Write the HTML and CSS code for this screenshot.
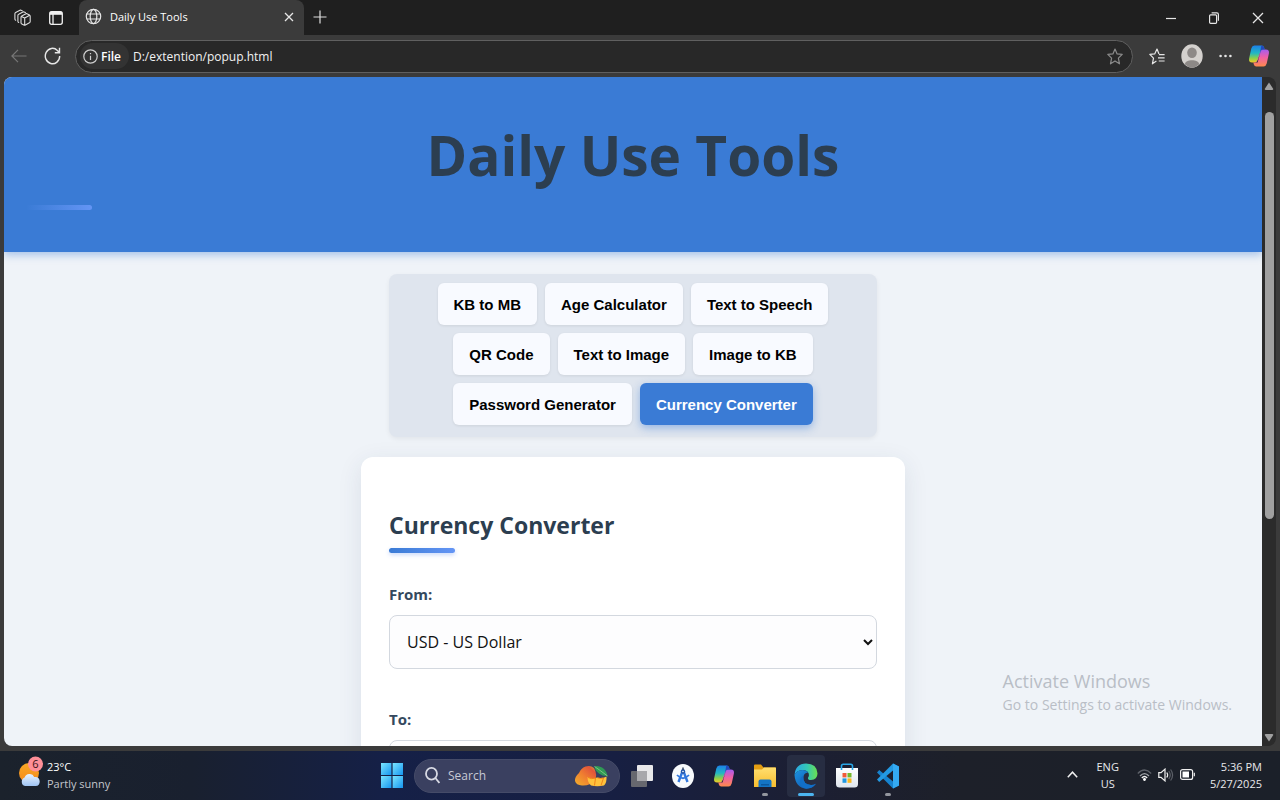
FILE: index.html
```html
<!DOCTYPE html>
<html lang="en">
<head>
<meta charset="utf-8">
<title>Daily Use Tools</title>
<link rel="stylesheet" href="styles.css">
</head>
<body>
<svg class="defs" aria-hidden="true">
  <defs>
    <linearGradient id="cpA" x1="0" y1="0" x2="0" y2="1"><stop offset="0" stop-color="#1c7fe8"/><stop offset=".45" stop-color="#22b7c4"/><stop offset=".75" stop-color="#8bd04a"/><stop offset="1" stop-color="#f5c927"/></linearGradient>
    <linearGradient id="cpB" x1="0" y1="0" x2="0" y2="1"><stop offset="0" stop-color="#a45cf0"/><stop offset=".45" stop-color="#ee5fa8"/><stop offset="1" stop-color="#ff8a4c"/></linearGradient>
    <linearGradient id="win" x1="0" y1="0" x2="1" y2="1"><stop offset="0" stop-color="#7be6ff"/><stop offset="1" stop-color="#1595f0"/></linearGradient>
    <linearGradient id="sun" x1="0" y1="0" x2="0" y2="1"><stop offset="0" stop-color="#f9a825"/><stop offset="1" stop-color="#f58a1c"/></linearGradient>
    <linearGradient id="cloud" x1="0" y1="0" x2="0" y2="1"><stop offset="0" stop-color="#eaf3ff"/><stop offset="1" stop-color="#9fc4f3"/></linearGradient>
    <linearGradient id="mango" x1="0" y1="1" x2="1" y2="0"><stop offset="0" stop-color="#f0b02c"/><stop offset=".45" stop-color="#f08030"/><stop offset=".8" stop-color="#e2553a"/><stop offset="1" stop-color="#c8b43c"/></linearGradient>
    <linearGradient id="fold" x1="0" y1="0" x2="0" y2="1"><stop offset="0" stop-color="#ffdf70"/><stop offset="1" stop-color="#f8bd2e"/></linearGradient>
    <linearGradient id="edA" x1="0" y1="0" x2="1" y2="0"><stop offset="0" stop-color="#2aa5e8"/><stop offset=".55" stop-color="#34c8b4"/><stop offset="1" stop-color="#6be04f"/></linearGradient>
    <linearGradient id="edB" x1="0" y1="0" x2="1" y2="1"><stop offset="0" stop-color="#1c93e0"/><stop offset="1" stop-color="#0d4fa8"/></linearGradient>
    <linearGradient id="store" x1="0" y1="0" x2="0" y2="1"><stop offset="0" stop-color="#fff"/><stop offset="1" stop-color="#dfe5ec"/></linearGradient>
    <symbol id="copilot" viewBox="0 0 24 24" preserveAspectRatio="none">
      <path d="M7 1.500h8q2 0 2.600 2l.6 2h-1.700q-2 0-2.700 2.400L11 15.500q-.9 3-3.500 3H4.600q-4.200 0-3.400-4L3.600 4.500Q4.500 1.500 7 1.500z" fill="url(#cpA)"/>
      <path d="M17 22.500H9q-2 0-2.600-2l-.6-2h1.700q2 0 2.700-2.400L13 8.500q.9-3 3.500-3h2.900q4.200 0 3.400 4l-2.400 10q-.9 3-3.400 3z" fill="url(#cpB)"/>
      <path d="M14.500 1.500q2.400 0 3 2l.8 2h-2q-2 0-2.700 2.400l-.8 2.700z" fill="#2348bd"/>
      <path d="M13.600 8 10.500 18.500H7.600q2.500-.5 3.300-3z" fill="#30323c"/>
    </symbol>
  </defs>
</svg>

<header class="browser">
  <div class="tabstrip">
    <button class="icon-btn" aria-label="Workspaces"><svg width="17" height="18" viewBox="0 0 17 18" fill="none" stroke="#dedede" stroke-width="1.100" stroke-linejoin="round" stroke-linecap="round"><path d="M7 8.300q0-1 .8-1.400l4.600-2.300 3 1.300q.8.400.8 1.300v5.300q0 .8-.8 1.300l-4 2.200q-.8.400-1.600 0L7.800 15q-.8-.4-.8-1.300zM7.400 7.400l3.300 1.500 5-2.700M10.700 9v7.200M4.700 13.500q-.8-.4-.8-1.300V6.500q0-.9.800-1.300l4.700-2.500 2 .8M1.700 11.200q-.8-.4-.8-1.300V4.700q0-.9.800-1.300L6.400 1l1.800.7"/></svg></button>
    <button class="icon-btn" aria-label="Tab actions"><svg width="16" height="16" viewBox="0 0 16 16" fill="none" stroke="#f0f0f0" stroke-width="1.300"><rect x="1.700" y="1.700" width="12.600" height="12.600" rx="2"/><path d="M2 3.300h12" stroke-width="3"/><path d="M5 4v10"/></svg></button>
    <div class="tab">
      <svg width="17" height="17" viewBox="0 0 17 17" fill="none" stroke="#e6e6e6" stroke-width="1.200"><circle cx="8.500" cy="8.500" r="7.200"/><ellipse cx="8.500" cy="8.500" rx="3.300" ry="7.200"/><path d="M1.800 6h13.400M1.800 11h13.400"/></svg>
      <span class="tab-title">Daily Use Tools</span>
      <button class="icon-btn" aria-label="Close tab"><svg width="10" height="10" viewBox="0 0 10 10" stroke="#e6e6e6" stroke-width="1.300"><path d="m1 1 8 8M9 1 1 9"/></svg></button>
    </div>
    <button class="icon-btn new-tab" aria-label="New tab"><svg width="14" height="14" viewBox="0 0 14 14" stroke="#dedede" stroke-width="1.200"><path d="M7 .5v13M.5 7h13"/></svg></button>
    <div class="window-controls">
      <button class="icon-btn" aria-label="Minimize"><svg width="10" height="10" viewBox="0 0 10 10" stroke="#e6e6e6" stroke-width="1.200"><path d="M0 5.500h10"/></svg></button>
      <button class="icon-btn" aria-label="Restore"><svg width="10" height="12" viewBox="0 0 10 12" fill="none" stroke="#e6e6e6" stroke-width="1.200"><rect x=".6" y="2.800" width="7" height="8.500" rx="1"/><path d="M2.600.8h5.300q1.500 0 1.500 1.600v6.400"/></svg></button>
      <button class="icon-btn" aria-label="Close"><svg width="12" height="12" viewBox="0 0 12 12" stroke="#e6e6e6" stroke-width="1.300"><path d="m1 1 10 10M11 1 1 11"/></svg></button>
    </div>
  </div>
  <div class="toolbar">
    <button class="icon-btn" aria-label="Back"><svg width="16" height="14" viewBox="0 0 16 14" fill="none" stroke="#777" stroke-width="1.200"><path d="M15.500 7H1M7 .8.900 7 7 13.200"/></svg></button>
    <button class="icon-btn reload" aria-label="Refresh"><svg width="17" height="18" viewBox="0 0 17 18" fill="none" stroke="#e6e6e6" stroke-width="1.400"><path d="M15.700 9a7.200 7.700 0 1 1-2.300-5.600l2 2M15.500.8v4.900h-4.700"/></svg></button>
    <div class="address">
      <button class="site-info"><svg width="15" height="15" viewBox="0 0 15 15" fill="none" stroke="#cfcfcf" stroke-width="1.200"><circle cx="7.500" cy="7.500" r="6.700"/><path d="M7.500 6.700v4.200M7.500 4v1.300"/></svg>File</button>
      <input class="url" type="text" aria-label="Address" value="D:/extention/popup.html">
      <button class="icon-btn" aria-label="Favorite"><svg width="16" height="17" viewBox="0 0 16 17" fill="none" stroke="#8c8c8c" stroke-width="1.200" stroke-linejoin="round"><path d="m8 1 2.100 4.900 5.100.5-3.800 3.700 1.100 5.700L8 12.900l-4.500 2.900 1.100-5.700L.8 6.400l5.100-.5z"/></svg></button>
    </div>
    <button class="icon-btn" aria-label="Favorites list"><svg width="16" height="17" viewBox="0 0 16 17" fill="none" stroke="#e6e6e6" stroke-width="1.200" stroke-linejoin="round"><path d="M10 6 8 1 5.700 5.900.8 6.400l3.700 3.700-1.100 5.700 4-2.700M10 6.600h5.600M9 9.800h6.600M9.800 13h5.800"/></svg></button>
    <button class="icon-btn" aria-label="Profile"><svg width="22" height="24" viewBox="0 0 22 24"><ellipse cx="11" cy="12" rx="10.700" ry="11.800" fill="#d4d1ce"/><ellipse cx="11" cy="8.800" rx="4.800" ry="5.200" fill="#8d8987"/><path d="M3.700 20.300C4.500 14.800 17.500 14.800 18.300 20.300Q11 27 3.700 20.300z" fill="#8d8987"/></svg></button>
    <button class="icon-btn" aria-label="More"><svg width="13" height="4" viewBox="0 0 13 4" fill="#e6e6e6"><circle cx="1.600" cy="2" r="1.300"/><circle cx="6.500" cy="2" r="1.300"/><circle cx="11.400" cy="2" r="1.300"/></svg></button>
    <button class="icon-btn" aria-label="Copilot"><svg width="22" height="24"><use href="#copilot"/></svg></button>
  </div>
</header>

<div class="viewport">
  <main class="page">
    <div class="banner"><h1>Daily Use Tools</h1></div>
    <nav class="tools">
      <button>KB to MB</button>
      <button>Age Calculator</button>
      <button>Text to Speech</button>
      <button>QR Code</button>
      <button>Text to Image</button>
      <button>Image to KB</button>
      <button>Password Generator</button>
      <button class="active">Currency Converter</button>
    </nav>
    <section class="card">
      <h2>Currency Converter</h2>
      <label for="from">From:</label>
      <select id="from"><option>USD - US Dollar</option></select>
      <label for="to">To:</label>
      <select id="to"><option></option></select>
    </section>
    <div class="watermark"><p class="wm-title">Activate Windows</p><p>Go to Settings to activate Windows.</p></div>
  </main>
  <div class="scrollbar" aria-hidden="true">
    <svg width="10" height="8" viewBox="0 0 10 8"><path d="M5 .5 9.300 7Q9.300 8 8 8H2Q.7 8 .7 7z" fill="#a0a0a0"/></svg>
    <div class="track"><div class="thumb"></div></div>
    <svg width="10" height="8" viewBox="0 0 10 8"><path d="M5 7.500.7 1Q.7 0 2 0h6q1.300 0 1.300 1z" fill="#a0a0a0"/></svg>
  </div>
</div>

<footer class="taskbar">
  <div class="weather">
    <svg width="26" height="32" viewBox="0 0 26 32"><circle cx="10" cy="17" r="10" fill="url(#sun)"/><path d="M6 30a4.500 4.500 0 0 1-.4-8.500Q7 17.500 11 18q3 .2 4.200 3 5-.8 5.500 4.300.1 4.700-4 4.700z" fill="url(#cloud)"/><circle cx="16.500" cy="8" r="7.500" fill="#ff8f97"/><text x="16.500" y="12" text-anchor="middle" class="badge-text">6</text></svg>
    <div><p class="temp">23°C</p><p>Partly sunny</p></div>
  </div>
  <div class="dock">
    <button class="app" aria-label="Start"><svg width="22" height="25" viewBox="0 0 22 25" fill="url(#win)"><rect width="10.400" height="12"/><rect x="11.600" width="10.400" height="12"/><rect y="13" width="10.400" height="12"/><rect x="11.600" y="13" width="10.400" height="12"/></svg></button>
    <label class="search">
      <svg width="15" height="17" viewBox="0 0 15 17" fill="none" stroke="#d8dae4" stroke-width="1.800"><ellipse cx="6.500" cy="6.800" rx="5.500" ry="5.900"/><path d="m10.400 11 4 5"/></svg>
      <input type="text" placeholder="Search" aria-label="Search">
      <svg width="36" height="22" viewBox="0 0 36 22"><path d="M20 3q-3.500-3-8.500-1.500Q7 3 5 8 .5 12 1 16q1 4 7 4.500 8 .5 12.500-5 3.500-5.500-.5-12.500z" fill="url(#mango)"/><path d="M20.500 1.500q3-1.500 7.500 1t5.500 8.500q-4.500.5-8.500-2.500t-4.500-7z" fill="#2f9a55"/><path d="m20.500 1.500 5 3.500 8 6" fill="none" stroke="#8fce8a" stroke-width=".8"/><path d="M13.500 12q4 2.500 9.500.5 5 1.500 9.500-1 .5 6-2.500 9-7 1.500-13 0-3.500-3-3.500-8.500z" fill="#ffc23c"/><path d="M14 12.500q3.500 2 7.500.5l-1 7.500M23.500 12.800q3 1.200 6 .2l-2.500 7.500" fill="none" stroke="#f08418"/></svg>
    </label>
    <button class="app" aria-label="Task view"><svg width="24" height="24" viewBox="0 0 24 24"><rect x="7" y="1" width="16" height="16" rx="1" fill="#e8e8ea"/><rect x="1" y="7" width="16" height="16" rx="1" fill="#707074" fill-opacity=".9"/><path d="M7 7h10v10H7z" fill="#a8a8ac"/></svg></button>
    <button class="app" aria-label="Android Studio"><svg width="22" height="24" viewBox="0 0 22 24"><ellipse cx="11" cy="12" rx="11" ry="12" fill="#f8fafc"/><path d="M11 6 6.500 18M11 6l4.500 12" stroke="#3277dd" stroke-width="2.400"/><path d="M5 11q6 6.500 12 0" fill="none" stroke="#3277dd" stroke-width="1.800"/><circle cx="11" cy="7.500" r="2.200" fill="#2456a8"/><path d="M11 3.500V6" stroke="#30405c" stroke-width="1.500"/><circle cx="11" cy="7.500" r=".8" fill="#fff"/></svg></button>
    <button class="app" aria-label="Copilot"><svg width="22" height="24"><use href="#copilot"/></svg></button>
    <button class="app running" aria-label="File Explorer"><svg width="24" height="24" viewBox="0 0 24 24"><path d="M1 1.500Q1 .5 2 .5h6l2.500 3H23V10H1z" fill="#e39d12"/><path d="M1 5.500h8l2-2h11q1 0 1 1V23H1z" fill="url(#fold)"/><path d="M5.500 23v-5.500q0-2 2-2h9q2 0 2 2V23z" fill="#1474c4"/><path d="M8 20h8v1.500H8z" fill="#0b579d"/></svg></button>
    <button class="app running current" aria-label="Microsoft Edge"><svg width="24" height="26" viewBox="0 0 24 26"><path d="M.5 12Q1.500.7 12 .5 23 .7 23.500 10.500q-.2 6-6.500 6.500-3.500 0-3-2.300 1.400-1.500.8-4Q13.400 7 8.500 7 2.800 7.200.5 12z" fill="url(#edA)"/><path d="M.5 12Q2.800 7.200 8.500 7q3.900 0 5.500 2.700-3.600-.3-4.700 4.100-.6 7.500 7.700 8.200 2.900 0 5-1.200-3.600 4.900-9.700 4.900Q1.500 24.700.5 12z" fill="url(#edB)"/><path d="M9.300 13.800q-.6 7.500 7.700 8.200 2.900 0 5-1.200-3.600 4.900-9.700 4.900-5.600-.6-6.200-6.400-.2-5.500 4-7.300z" fill="#126fc8"/></svg></button>
    <button class="app" aria-label="Microsoft Store"><svg width="22" height="25" viewBox="0 0 22 25"><path d="M0 5h22v16q0 3.500-3.500 3.500h-15Q0 24.500 0 21z" fill="url(#store)"/><path d="M5.500 7V3q0-1.800 1.800-1.800h7.400q1.800 0 1.800 1.800v4" fill="none" stroke="#2aa8e8" stroke-width="1.600"/><path d="M6.500 10h4v4.400h-4z" fill="#f15a3a"/><path d="M11.500 10h4v4.400h-4z" fill="#76b82a"/><path d="M6.500 15.400h4v4.400h-4z" fill="#1f97e0"/><path d="M11.500 15.400h4v4.400h-4z" fill="#fbb81b"/></svg></button>
    <button class="app running" aria-label="Visual Studio Code"><svg width="24" height="26" viewBox="0 0 24 26"><path d="m17 .5 6 3v19l-6 3L1 9.500 3.200 7 17 18.500z" fill="#1683cf"/><path d="M17 .5 1 16.500 3.200 19 17 7.500z" fill="#2399e2"/><path d="m17 .5 6 3v19l-6 3z" fill="#34aaf2"/></svg></button>
  </div>
  <div class="tray">
    <svg width="11" height="7" viewBox="0 0 11 7" fill="none" stroke="#f0f0f0" stroke-width="1.500"><path d="m.8 6.200 4.700-5 4.700 5"/></svg>
    <div class="lang"><p>ENG</p><p>US</p></div>
    <div class="status">
      <svg width="15" height="12" viewBox="0 0 15 12" fill="none" stroke="#5c6068" stroke-width="1.300"><path d="M.8 4.500q6.700-7 13.400 0"/><path d="M3 7q4.500-4.700 9 0" stroke="#a0a3a8"/><path d="M4.800 9q2.700-3 5.400 0" stroke="#f2f2f2"/><circle cx="7.500" cy="10.500" r=".8" fill="#fff" stroke="#fff"/></svg>
      <svg width="16" height="14" viewBox="0 0 16 14" fill="none" stroke="#f0f0f0" stroke-width="1.200"><path d="M.8 4.600H3l4-3.500v11.800l-4-3.500H.8z"/><path d="M8.800 4.500q1.700 2.500 0 5"/><path d="M10.800 3q2.900 4 0 8M12.600 1.500q4 5.500 0 11" stroke="#5c6068"/></svg>
      <svg width="15" height="11" viewBox="0 0 15 11" fill="none" stroke="#f0f0f0" stroke-width="1.200"><rect x=".6" y=".6" width="12" height="9.800" rx="2"/><path d="M14.300 3.700v3.600"/><path d="M2.500 2.500H9v6H2.500z" fill="#fff" stroke="none"/></svg>
    </div>
    <div class="clock"><p>5:36 PM</p><p>5/27/2025</p></div>
  </div>
</footer>
</body>
</html>
```

FILE: styles.css
```css
* { box-sizing: border-box; }

body {
  margin: 0;
  height: 100vh;
  display: flex;
  flex-direction: column;
  overflow: hidden;
  background: #3b3b3b;
  font-family: "Open Sans", "Noto Sans", sans-serif;
}

p, h1, h2 { margin: 0; }
svg { display: block; flex: none; }
.defs { position: absolute; width: 0; height: 0; }
button, input, select { font: inherit; }
button { border: 0; padding: 0; }

.icon-btn {
  background: none;
  display: grid;
  place-items: center;
  flex: none;
}

/* Browser chrome */
.browser { flex: none; color: #fff; }

.tabstrip {
  height: 35px;
  display: flex;
  align-items: center;
  gap: 17px;
  padding-left: 14px;
  background: #1f1f1f;
}

.tab {
  align-self: stretch;
  width: 225px;
  margin-left: -2px;
  display: flex;
  align-items: center;
  gap: 8px;
  padding: 0 10px 2px 6px;
  background: #3b3b3b;
  border-radius: 8px 8px 0 0;
}

.tab-title { flex: 1; font-size: 11px; }
.new-tab { margin-left: -8px; margin-bottom: 2px; }

.window-controls {
  margin-left: auto;
  display: flex;
  align-items: center;
  gap: 33px;
  padding-right: 16px;
}

.toolbar {
  height: 42px;
  display: flex;
  align-items: center;
  gap: 16px;
  padding: 0 10px 0 11px;
}

.reload { margin-left: 1px; }

.address {
  flex: 1;
  height: 33px;
  margin-left: -2px;
  display: flex;
  align-items: center;
  gap: 4px;
  padding: 0 9px 0 4px;
  background: #282828;
  border: 1px solid #606060;
  border-radius: 17px;
}

.site-info {
  height: 26px;
  display: flex;
  align-items: center;
  gap: 3px;
  padding: 0 8px 0 3px;
  border-radius: 13px;
  background: #333;
  color: #fff;
  font-size: 12px;
  font-weight: 600;
}

.url {
  flex: 1;
  min-width: 0;
  padding: 0;
  border: 0;
  background: none;
  color: #f2f2f2;
  font-size: 12px;
}

/* Web page */
.viewport {
  flex: 1;
  min-height: 0;
  display: flex;
  margin: 0 4px 5px;
}

.page {
  flex: 1;
  position: relative;
  overflow: hidden;
  background: #eff3f8;
  border-radius: 8px 0 0 8px;
}

.banner {
  padding: 36px 22px 42px;
  background: #3a7bd5;
  box-shadow: 0 3px 8px rgba(58, 123, 213, .4);
}

.banner h1 {
  color: #2c3e50;
  font-size: 55px;
  line-height: 84px;
  text-align: center;
}

.banner h1::after,
.card h2::after {
  content: "";
  display: block;
  width: 66px;
  height: 5px;
  border-radius: 3px;
  background: linear-gradient(90deg, #3a7bd5, #6495f5);
}

.banner h1::after { margin-top: 8px; }

.tools {
  width: 488px;
  margin: 22px auto 20px;
  padding: 9px 8px 12px;
  display: flex;
  flex-wrap: wrap;
  justify-content: center;
  gap: 8px;
  background: #dfe5ee;
  border-radius: 8px;
  box-shadow: 0 2px 5px rgba(0, 0, 0, .06);
}

.tools button {
  height: 42px;
  padding: 0 16px;
  border-radius: 6px;
  background: #f8faff;
  color: #000;
  font: bold 15px "Liberation Sans", sans-serif;
  box-shadow: 0 1px 3px rgba(0, 0, 0, .08);
}

.tools .active {
  background: #3a7bd5;
  color: #fff;
  box-shadow: 0 3px 8px rgba(58, 123, 213, .45);
}

.card {
  width: 544px;
  margin: 0 auto;
  padding: 50px 28px;
  background: #fff;
  border-radius: 12px;
  box-shadow: 0 6px 24px rgba(40, 60, 90, .1);
}

.card h2 {
  color: #2c3e50;
  font-size: 23px;
  line-height: 36px;
  margin-bottom: 30px;
}

.card h2::after {
  margin-top: 5px;
  box-shadow: 0 2px 4px rgba(80, 130, 240, .3);
}

.card label {
  display: block;
  color: #34495e;
  font-size: 15px;
  font-weight: 700;
  line-height: 22px;
  margin-bottom: 10px;
}

.card select {
  display: block;
  width: 100%;
  height: 54px;
  margin-bottom: 39px;
  padding: 0 13px;
  border: 1px solid #d3d8df;
  border-radius: 8px;
  background: #fdfdfe;
  color: #111;
  font-size: 16px;
}

.watermark {
  position: absolute;
  right: 30px;
  bottom: 31px;
  color: #b9bec6;
  font-size: 14px;
  line-height: 20px;
}

.wm-title { font-size: 18px; line-height: 27px; }

.scrollbar {
  flex: none;
  width: 14px;
  display: flex;
  flex-direction: column;
  align-items: center;
  justify-content: space-between;
  padding: 5px 0 4px;
  background: #2b2b2b;
  border-radius: 0 8px 8px 0;
}

.track { flex: 1; padding: 22px 0 5px; }
.thumb { width: 9px; height: 66%; border-radius: 5px; background: #a0a0a0; }

/* Taskbar */
.taskbar {
  flex: none;
  height: 49px;
  display: grid;
  grid-template-columns: 1fr auto 1fr;
  align-items: center;
  background: linear-gradient(90deg, #1b222c 0, #19202f 15%, #152047 30%, #171f42 48%, #1c1f33 63%, #1d2029 75%, #1b2029 100%);
  color: #e8e9ec;
  font-size: 11px;
  line-height: 17px;
}

.weather {
  display: flex;
  align-items: center;
  gap: 2px;
  padding: 0 0 2px 19px;
  color: #c3c6cc;
}

.weather svg { margin-bottom: 5px; }
.temp { color: #fff; }
.badge-text { font: 11px "Open Sans", sans-serif; fill: #3a1216; }

.dock { display: flex; align-items: center; gap: 3px; }

.app {
  position: relative;
  width: 38px;
  height: 42px;
  display: grid;
  place-items: center;
  border-radius: 4px;
  background: none;
}

.current { background: #272d42; }

.running::after {
  content: "";
  position: absolute;
  bottom: 1px;
  left: 50%;
  width: 6px;
  height: 3px;
  margin-left: -3px;
  border-radius: 2px;
  background: #94979f;
}

.current::after { width: 16px; margin-left: -8px; background: #4cb4f0; }

.search {
  width: 206px;
  height: 34px;
  display: flex;
  align-items: center;
  gap: 8px;
  padding: 0 9px 0 10px;
  border: 1px solid #454b68;
  border-radius: 17px;
  background: #3a4060;
}

.search input {
  flex: 1;
  min-width: 0;
  padding: 0;
  border: 0;
  background: none;
  color: #fff;
  font-size: 12px;
}

.search input::placeholder { color: #c8cad5; }

.tray {
  display: flex;
  align-items: center;
  justify-content: flex-end;
  gap: 18px;
  padding: 0 18px 2px 0;
}

.lang { text-align: center; }
.status { display: flex; align-items: center; gap: 6px; }
.clock { text-align: right; margin-left: -3px; }
```
